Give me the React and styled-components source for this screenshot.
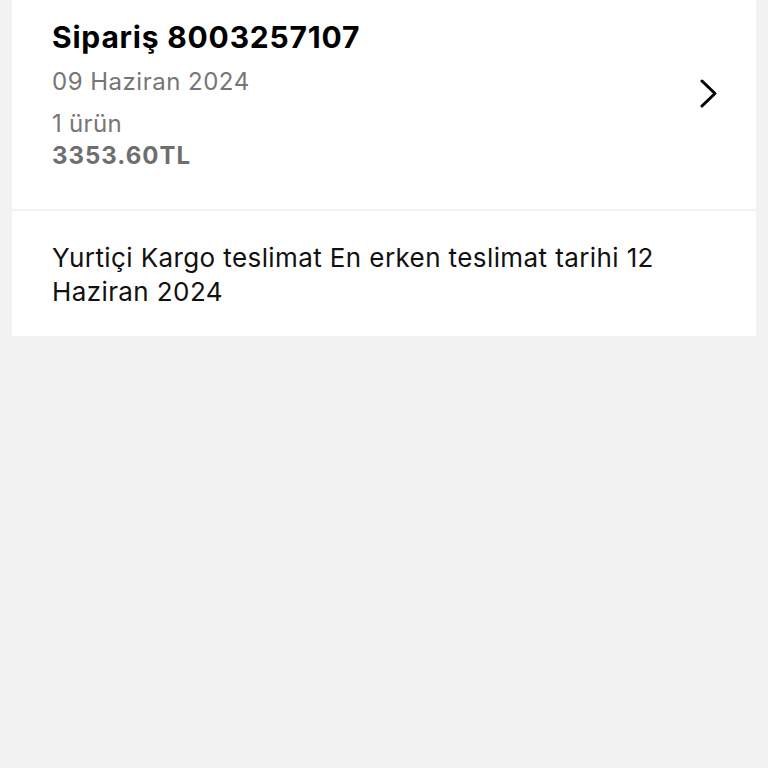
import React from "react";
import styled, { createGlobalStyle } from "styled-components";

const GlobalStyle = createGlobalStyle`
  html, body {
    margin: 0;
    padding: 0;
    background: #f2f2f2;
  }
  body {
    font-family: Inter, "Noto Sans", sans-serif;
    -webkit-font-smoothing: antialiased;
  }
`;

export default function App() {
  return (
    <>
      <GlobalStyle />
      <Page>
        <OrderCard>
          <OrderInfo>
            <Title>Sipariş 8003257107</Title>
            <DateText>09 Haziran 2024</DateText>
            <Count>1 ürün</Count>
            <Price>3353.60TL</Price>
          </OrderInfo>
          <Chevron width="20" height="30" viewBox="0 0 20 30">
            <path
              d="M3 2 L16 14.5 L3 27"
              fill="none"
              stroke="#000"
              strokeWidth="3"
              strokeLinecap="round"
              strokeLinejoin="round"
            />
          </Chevron>
        </OrderCard>
        <DeliveryCard>
          Yurtiçi Kargo teslimat En erken teslimat tarihi 12 Haziran 2024
        </DeliveryCard>
      </Page>
    </>
  );
}

const Page = styled.div`
  min-height: 768px;
  padding: 0 12px;
  display: flex;
  flex-direction: column;
  gap: 2px;
`;

const OrderCard = styled.div`
  background: #fff;
  height: 209px;
  box-sizing: border-box;
  padding: 17px 37px 0 40px;
  display: flex;
  justify-content: space-between;
  align-items: flex-start;
`;

const OrderInfo = styled.div`
  display: flex;
  flex-direction: column;
`;

const Title = styled.div`
  font-size: 30px;
  font-weight: 700;
  color: #000;
  line-height: 40px;
  letter-spacing: 0.8px;
`;

const DateText = styled.div`
  font-size: 24px;
  color: #767676;
  line-height: 32px;
  margin-top: 9px;
  letter-spacing: 0.5px;
`;

const Count = styled.div`
  font-size: 24px;
  color: #767676;
  line-height: 32px;
  margin-top: 10px;
  letter-spacing: 0.3px;
`;

const Price = styled.div`
  font-size: 24px;
  font-weight: 700;
  color: #6e6e6e;
  line-height: 32px;
  letter-spacing: 1px;
`;

const Chevron = styled.svg`
  margin-top: 62px;
`;

const DeliveryCard = styled.div`
  background: #fff;
  height: 125px;
  box-sizing: border-box;
  padding: 30px 60px 0 40px;
  font-size: 26px;
  line-height: 34px;
  letter-spacing: 0.4px;
  color: #111;
`;
